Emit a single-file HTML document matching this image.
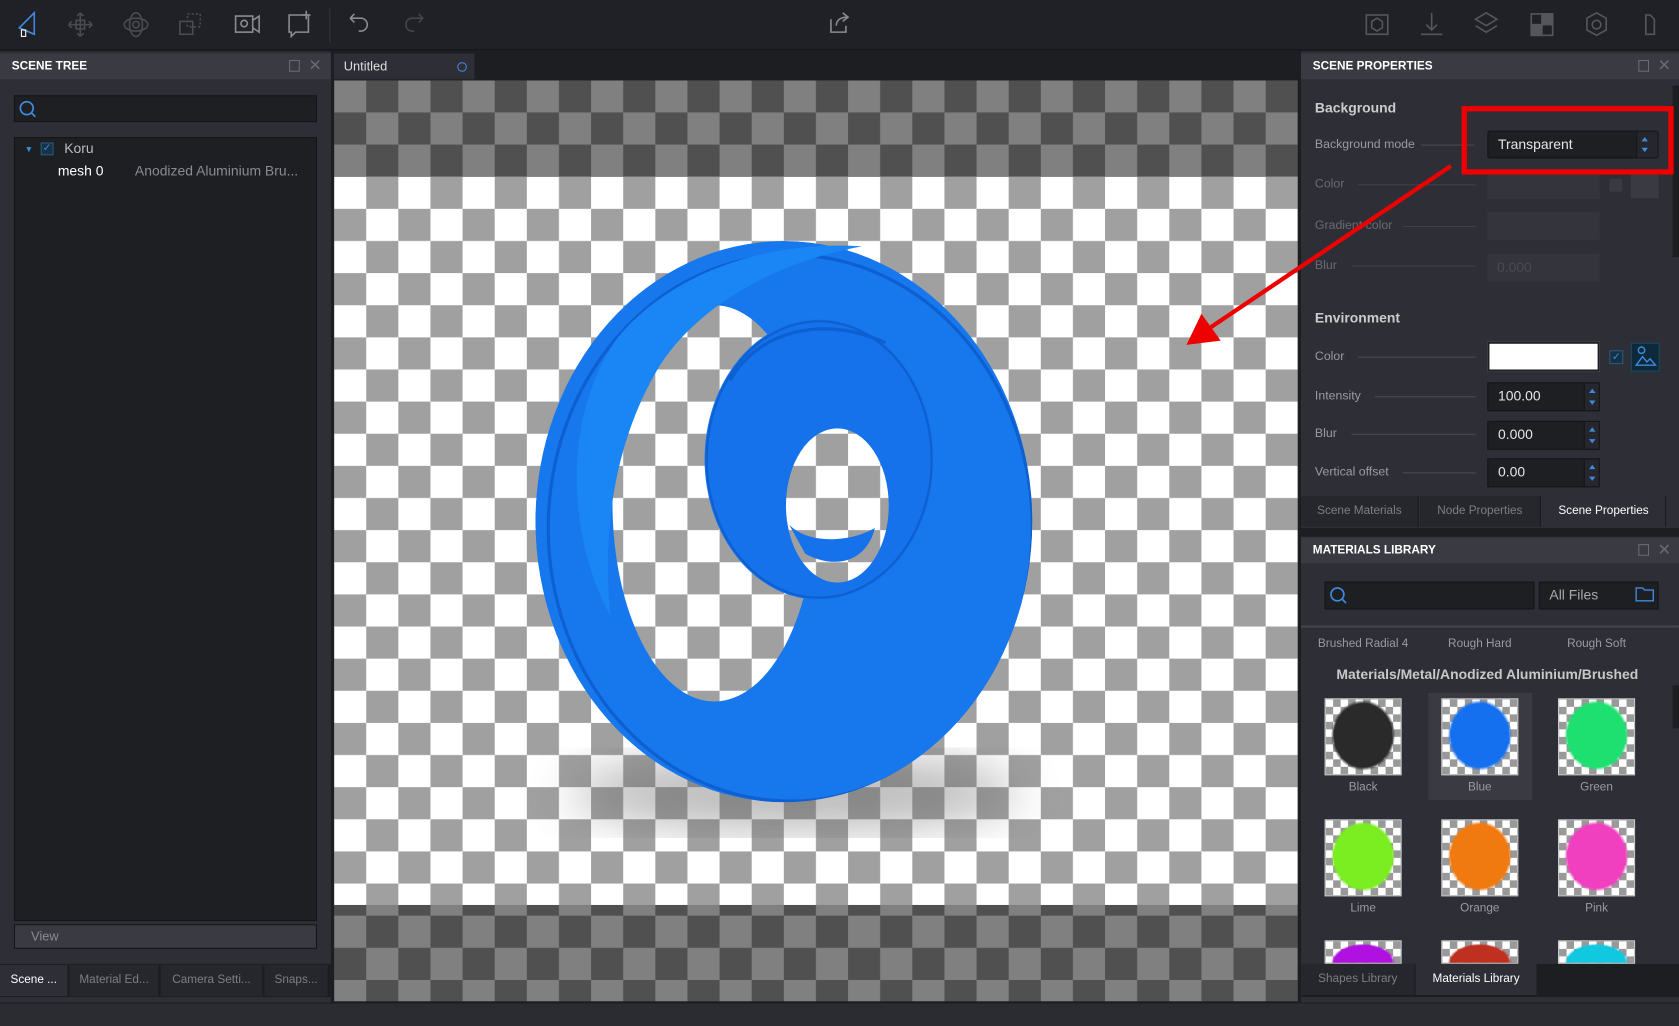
<!DOCTYPE html>
<html><head><meta charset="utf-8"><style>
*{margin:0;padding:0;box-sizing:border-box}
html,body{width:1679px;height:1026px;overflow:hidden;background:#2a2b30;font-family:"Liberation Sans",sans-serif}
#w{width:1568px;height:958px;position:relative;transform:scale(1.07079,1.07098);transform-origin:0 0;background:#1d1e22}
.a{position:absolute}
.hd{position:absolute;height:24px;background:#393a42;color:#fff;font-size:11px;font-weight:bold;line-height:24px;padding-left:11px}
.lbl{position:absolute;color:#9a9ba2;font-size:11.5px}
.line{position:absolute;height:1px;background:#4a4b52}
.inp{position:absolute;background:#1e1f23;border:1px solid #141518;color:#e6e6e6;font-size:13px;padding-left:9px;line-height:24px}
.spin{position:absolute;right:0;top:0;width:14px;height:100%;border-left:1px solid #141518;background:#26272c}
.spin:before{content:"";position:absolute;left:4px;top:5px;border:3px solid transparent;border-bottom:4px solid #3f8ae0;border-top:0}
.spin:after{content:"";position:absolute;left:4px;bottom:5px;border:3px solid transparent;border-top:4px solid #3f8ae0;border-bottom:0}
.tab{position:absolute;height:29px;line-height:29px;font-size:11px;color:#7d7e85;text-align:center;background:#26272c;border-right:1px solid #1a1b1e}
.mat{position:absolute;width:72px;height:72px;border:1px solid #ccc}
.ml{position:absolute;width:110px;text-align:center;color:#9a9ba2;font-size:11px}
</style></head><body><div id="w">
<div class="a" style="left:0;top:0;width:1568px;height:47px;background:#202126;border-bottom:1px solid #151619"></div>
<svg class="a" style="left:0;top:0" width="1568" height="47" fill="none" stroke-width="1.5">
<path d="M32 12 L18 26 L32 32 Z" stroke="#3f8ae0"/><rect x="20" y="28" width="4" height="6" stroke="#fff" stroke-width="1"/>
<g stroke="#4a4b52"><path d="M75 12v22M64 23h22M75 12l-3 3M75 12l3 3M75 34l-3-3M75 34l3-3M64 23l3-3M64 23l3 3M86 23l-3-3M86 23l-3 3"/><rect x="71" y="19" width="8" height="8"/>
<ellipse cx="127" cy="23" rx="11" ry="6"/><ellipse cx="127" cy="23" rx="6" ry="11"/><circle cx="127" cy="23" r="3"/>
<rect x="168" y="20" width="12" height="12"/><rect x="175" y="13" width="12" height="12" stroke-dasharray="2 2"/></g>
<g stroke="#8a8b92"><rect x="220" y="15" width="16" height="15"/><path d="M236 19l6-4v15l-6-4"/><circle cx="228" cy="22" r="3"/>
<path d="M270 14h18v16h-12l-4 4v-4h-2z"/><path d="M286 10v8M282 14h8"/>
<path d="M327 17h10a6 6 0 0 1 0 12h-2M327 17l4-4M327 17l4 4"/></g>
<path d="M395 17h-10a6 6 0 0 0 0 12h2M395 17l-4-4M395 17l-4 4" stroke="#44454b"/>
<path d="M308 8v32" stroke="#2c2d32"/>
<g stroke="#8a8b92"><path d="M776 18v12h14v-6"/><path d="M781 24c0-5 4-8 10-8M787 12l5 4-5 4"/></g>
<g stroke="#55565c"><rect x="1276" y="14" width="20" height="18"/><path d="M1286 17l5 3v6l-5 3-5-3v-6z"/>
<path d="M1337 12v16M1332 23l5 5 5-5M1327 32h20"/>
<path d="M1388 12l10 6-10 6-10-6z M1378 24l10 6 10-6"/>
<rect x="1430" y="13" width="20" height="20"/><rect x="1440" y="13" width="10" height="10" fill="#55565c"/><rect x="1430" y="23" width="10" height="10" fill="#55565c"/>
<path d="M1491 12l9 5v11l-9 5-9-5v-11z"/><circle cx="1491" cy="23" r="4"/>
<path d="M1537 14v18h8v-14l-4-4z"/></g>
</svg>
<div class="a" style="left:0;top:48px;width:309px;height:888px;background:#2e2f36"></div>
<div class="hd" style="left:0;top:50px;width:309px">SCENE TREE</div>
<div class="a" style="left:270px;top:56px;width:10px;height:11px;border:1px solid #6a6b72"></div>
<div class="a" style="left:288px;top:52px;color:#6a6b72;font-size:15px">✕</div>
<div class="a" style="left:13px;top:89px;width:283px;height:25px;background:#1e1f23;border:1px solid #141518"></div>
<svg class="a" style="left:17px;top:93px" width="18" height="18" fill="none" stroke="#3f8ae0" stroke-width="1.6"><circle cx="8" cy="8" r="6"/><path d="M12 12l4 4"/></svg>
<div class="a" style="left:13px;top:128px;width:283px;height:732px;background:#1e1f23;border:1px solid #141518"></div>
<div class="a" style="left:23px;top:135px;color:#3f8ae0;font-size:8px">▼</div>
<div class="a" style="left:38px;top:133px;width:12px;height:12px;background:#153246;border:1px solid #2c5a7a;color:#3f8ae0;font-size:10px;line-height:10px;text-align:center">✓</div>
<div class="a" style="left:60px;top:131px;color:#bbb;font-size:13px">Koru</div>
<div class="a" style="left:54px;top:152px;color:#fff;font-size:13px">mesh 0</div>
<div class="a" style="left:126px;top:152px;color:#8a8b92;font-size:13px">Anodized Aluminium Bru...</div>
<div class="a" style="left:13px;top:863px;width:283px;height:23px;background:#393a42;border:1px solid #141518;color:#8a8b92;font-size:12px;line-height:21px;padding-left:15px">View</div>
<div class="a" style="left:0;top:900px;width:309px;height:31px;background:#1d1e22"></div>
<div class="tab" style="left:0;top:901px;width:64px;background:#2e2f36;color:#fff">Scene ...</div>
<div class="tab" style="left:65px;top:901px;width:84px">Material Ed...</div>
<div class="tab" style="left:150px;top:901px;width:96px">Camera Setti...</div>
<div class="tab" style="left:247px;top:901px;width:60px">Snaps...</div>
<div class="a" style="left:312px;top:50px;width:131px;height:24px;background:#2e2f36;color:#ddd;font-size:12px;line-height:24px;padding-left:9px">Untitled</div>
<div class="a" style="left:427px;top:58px;width:9px;height:9px;border:1.5px solid #3f8ae0;border-radius:50%"></div>
<svg class="a" style="left:312px;top:75px" width="900" height="860">
<defs>
<pattern id="pd" width="60" height="60" patternUnits="userSpaceOnUse"><rect width="60" height="60" fill="#505050"/><rect width="30" height="30" fill="#808080"/><rect x="30" y="30" width="30" height="30" fill="#808080"/></pattern>
<pattern id="pl" width="60" height="60" patternUnits="userSpaceOnUse"><rect width="60" height="60" fill="#fff"/><rect width="30" height="30" fill="#a0a0a0"/><rect x="30" y="30" width="30" height="30" fill="#a0a0a0"/></pattern>
<filter id="bl"><feGaussianBlur stdDeviation="22"/></filter>
<mask id="m"><ellipse cx="420" cy="412" rx="232" ry="262" fill="#fff"/><ellipse cx="355" cy="395" rx="95" ry="185" fill="#000"/></mask>
</defs>
<rect width="900" height="90" fill="url(#pd)"/>
<rect y="90" width="900" height="680" fill="url(#pl)"/>
<rect y="770" width="900" height="90" fill="url(#pd)"/>
<ellipse cx="430" cy="665" rx="210" ry="35" fill="#666" opacity=".45" filter="url(#bl)"/>
<ellipse cx="420" cy="412" rx="232" ry="262" fill="#1778ee" mask="url(#m)"/>
<ellipse cx="426" cy="418" rx="226" ry="255" fill="none" stroke="#0e5fd0" stroke-width="3" mask="url(#m)"/>
<path d="M265 240 C320 175 410 150 493 155 C420 168 345 205 305 265 C262 335 250 420 258 500 C215 420 215 310 265 240 Z" fill="#1a86f5"/>
<ellipse cx="453" cy="354" rx="107" ry="131" fill="#1572ea"/>
<ellipse cx="453" cy="354" rx="105" ry="129" fill="none" stroke="#0e5fd0" stroke-width="2"/>
<ellipse cx="470" cy="397" rx="48" ry="72" fill="url(#pl)"/>
<path d="M425 415 C445 435 485 430 505 418 C498 448 470 458 440 442 Z" fill="#1572ea"/>
<path d="M370 280 C395 235 455 218 515 245" stroke="#0e5fd0" stroke-width="3" fill="none"/>
</svg>
<div class="a" style="left:1215px;top:48px;width:353px;height:888px;background:#2e2f36"></div>
<div class="hd" style="left:1215px;top:50px;width:353px">SCENE PROPERTIES</div>
<div class="a" style="left:1530px;top:56px;width:10px;height:11px;border:1px solid #6a6b72"></div>
<div class="a" style="left:1548px;top:52px;color:#6a6b72;font-size:15px">✕</div>
<div class="a" style="left:1228px;top:93px;color:#ccc;font-size:13px;font-weight:bold">Background</div>
<div class="lbl" style="left:1228px;top:129px">Background mode</div><div class="line" style="left:1327px;top:135px;width:50px"></div>
<div class="inp" style="left:1389px;top:122px;width:160px;height:26px;border-radius:2px">Transparent<div class="spin" style="width:20px"></div></div>
<div class="lbl" style="left:1228px;top:166px;color:#6a6b72">Color</div><div class="line" style="left:1268px;top:172px;width:110px;background:#3f4047"></div>
<div class="a" style="left:1389px;top:160px;width:105px;height:26px;background:#34353c"></div>
<div class="a" style="left:1503px;top:167px;width:12px;height:12px;background:#3a3b42"></div>
<div class="a" style="left:1523px;top:163px;width:26px;height:22px;background:#3a3b42"></div>
<div class="lbl" style="left:1228px;top:205px;color:#6a6b72">Gradient color</div><div class="line" style="left:1310px;top:211px;width:68px;background:#3f4047"></div>
<div class="a" style="left:1389px;top:198px;width:105px;height:26px;background:#34353c"></div>
<div class="lbl" style="left:1228px;top:242px;color:#6a6b72">Blur</div><div class="line" style="left:1262px;top:248px;width:116px;background:#3f4047"></div>
<div class="a" style="left:1389px;top:237px;width:105px;height:26px;background:#34353c;color:#4a4b52;font-size:13px;line-height:26px;padding-left:9px">0.000</div>
<div class="a" style="left:1228px;top:289px;color:#ccc;font-size:13px;font-weight:bold">Environment</div>
<div class="lbl" style="left:1228px;top:327px">Color</div><div class="line" style="left:1268px;top:333px;width:110px"></div>
<div class="a" style="left:1389px;top:319px;width:105px;height:28px;background:#fff;border:2px solid #1e1f23"></div>
<div class="a" style="left:1503px;top:327px;width:13px;height:13px;background:#153246;border:1px solid #2c5a7a;color:#3f8ae0;font-size:10px;line-height:11px;text-align:center">✓</div>
<div class="a" style="left:1523px;top:320px;width:27px;height:27px;background:#0e2a3a;border:1px solid #1a4a63"></div>
<svg class="a" style="left:1526px;top:322px" width="22" height="22" fill="none" stroke="#3f8ae0" stroke-width="1.3"><circle cx="7" cy="5" r="3"/><path d="M2 19l6-8 4 5 3-3 5 6z"/></svg>
<div class="lbl" style="left:1228px;top:364px">Intensity</div><div class="line" style="left:1284px;top:370px;width:94px"></div>
<div class="inp" style="left:1389px;top:357px;width:105px;height:27px">100.00<div class="spin"></div></div>
<div class="lbl" style="left:1228px;top:399px">Blur</div><div class="line" style="left:1262px;top:405px;width:116px"></div>
<div class="inp" style="left:1389px;top:393px;width:105px;height:27px">0.000<div class="spin"></div></div>
<div class="lbl" style="left:1228px;top:435px">Vertical offset</div><div class="line" style="left:1310px;top:441px;width:68px"></div>
<div class="inp" style="left:1389px;top:428px;width:105px;height:27px">0.00<div class="spin"></div></div>
<div class="a" style="left:1562px;top:80px;width:6px;height:160px;background:#1d1e22"></div>
<div class="tab" style="left:1215px;top:463px;width:110px">Scene Materials</div>
<div class="tab" style="left:1326px;top:463px;width:113px">Node Properties</div>
<div class="tab" style="left:1440px;top:463px;width:116px;background:#2e2f36;color:#fff">Scene Properties</div>
<div class="a" style="left:1215px;top:493px;width:353px;height:8px;background:#1d1e22"></div>
<div class="hd" style="left:1215px;top:502px;width:353px">MATERIALS LIBRARY</div>
<div class="a" style="left:1530px;top:508px;width:10px;height:11px;border:1px solid #6a6b72"></div>
<div class="a" style="left:1548px;top:504px;color:#6a6b72;font-size:15px">✕</div>
<div class="a" style="left:1237px;top:543px;width:196px;height:26px;background:#1e1f23;border:1px solid #141518"></div>
<svg class="a" style="left:1241px;top:547px" width="18" height="18" fill="none" stroke="#3f8ae0" stroke-width="1.6"><circle cx="8" cy="8" r="6"/><path d="M12 12l4 4"/></svg>
<div class="inp" style="left:1437px;top:543px;width:112px;height:26px;color:#aaa">All Files</div>
<svg class="a" style="left:1527px;top:547px" width="18" height="16" fill="none" stroke="#3f8ae0" stroke-width="1.3"><path d="M1 2h6l2 2h8v10H1z"/></svg>
<div class="a" style="left:1215px;top:584px;width:353px;height:2px;background:#45464d"></div>
<div class="ml" style="left:1218px;top:595px">Brushed Radial 4</div>
<div class="ml" style="left:1327px;top:595px">Rough Hard</div>
<div class="ml" style="left:1436px;top:595px">Rough Soft</div>
<div class="a" style="left:1215px;top:622px;width:348px;text-align:center;color:#c8c8c8;font-size:13px;font-weight:bold">Materials/Metal/Anodized Aluminium/Brushed</div>
<div class="a" style="left:1334px;top:647px;width:97px;height:100px;background:#3a3b42"></div>
<div class="a" style="left:1562px;top:640px;width:6px;height:40px;background:#1d1e22"></div>
<div class="mat" style="left:1237px;top:652px;background:radial-gradient(ellipse 30px 33px at 50% 48%,#2a2a2a 90%,transparent 100%),repeating-conic-gradient(#999 0 25%,#fff 0 50%) 0 0/14px 14px"></div>
<div class="mat" style="left:1346px;top:652px;background:radial-gradient(ellipse 30px 33px at 50% 48%,#1570f0 90%,transparent 100%),repeating-conic-gradient(#999 0 25%,#fff 0 50%) 0 0/14px 14px"></div>
<div class="mat" style="left:1455px;top:652px;background:radial-gradient(ellipse 30px 33px at 50% 48%,#1ee070 90%,transparent 100%),repeating-conic-gradient(#999 0 25%,#fff 0 50%) 0 0/14px 14px"></div>
<div class="mat" style="left:1237px;top:765px;background:radial-gradient(ellipse 30px 33px at 50% 48%,#7aee20 90%,transparent 100%),repeating-conic-gradient(#999 0 25%,#fff 0 50%) 0 0/14px 14px"></div>
<div class="mat" style="left:1346px;top:765px;background:radial-gradient(ellipse 30px 33px at 50% 48%,#f07a10 90%,transparent 100%),repeating-conic-gradient(#999 0 25%,#fff 0 50%) 0 0/14px 14px"></div>
<div class="mat" style="left:1455px;top:765px;background:radial-gradient(ellipse 30px 33px at 50% 48%,#f040c0 90%,transparent 100%),repeating-conic-gradient(#999 0 25%,#fff 0 50%) 0 0/14px 14px"></div>
<div class="mat" style="left:1237px;top:878px;height:22px;background:radial-gradient(ellipse 30px 18px at 50% 100%,#b010e0 90%,transparent 100%),repeating-conic-gradient(#999 0 25%,#fff 0 50%) 0 0/14px 14px"></div>
<div class="mat" style="left:1346px;top:878px;height:22px;background:radial-gradient(ellipse 30px 18px at 50% 100%,#c03020 90%,transparent 100%),repeating-conic-gradient(#999 0 25%,#fff 0 50%) 0 0/14px 14px"></div>
<div class="mat" style="left:1455px;top:878px;height:22px;background:radial-gradient(ellipse 30px 18px at 50% 100%,#10c8e0 90%,transparent 100%),repeating-conic-gradient(#999 0 25%,#fff 0 50%) 0 0/14px 14px"></div>
<div class="ml" style="left:1218px;top:729px">Black</div>
<div class="ml" style="left:1327px;top:729px">Blue</div>
<div class="ml" style="left:1436px;top:729px">Green</div>
<div class="ml" style="left:1218px;top:842px">Lime</div>
<div class="ml" style="left:1327px;top:842px">Orange</div>
<div class="ml" style="left:1436px;top:842px">Pink</div>
<div class="a" style="left:1215px;top:900px;width:353px;height:31px;background:#1d1e22"></div>
<div class="tab" style="left:1215px;top:900px;width:107px">Shapes Library</div>
<div class="tab" style="left:1322px;top:900px;width:114px;background:#2e2f36;color:#fff">Materials Library</div>
<div class="a" style="left:0;top:937px;width:1568px;height:21px;background:#2b2c31"></div>
<div class="a" style="left:1365px;top:99px;width:198px;height:64px;border:5px solid #ee0000"></div>
<svg class="a" style="left:0;top:0" width="1568" height="958"><path d="M1355 155 L1130 306" stroke="#e00" stroke-width="4"/><path d="M1108 322 L1122 293 L1140 318 Z" fill="#e00"/></svg>
</div></body></html>
